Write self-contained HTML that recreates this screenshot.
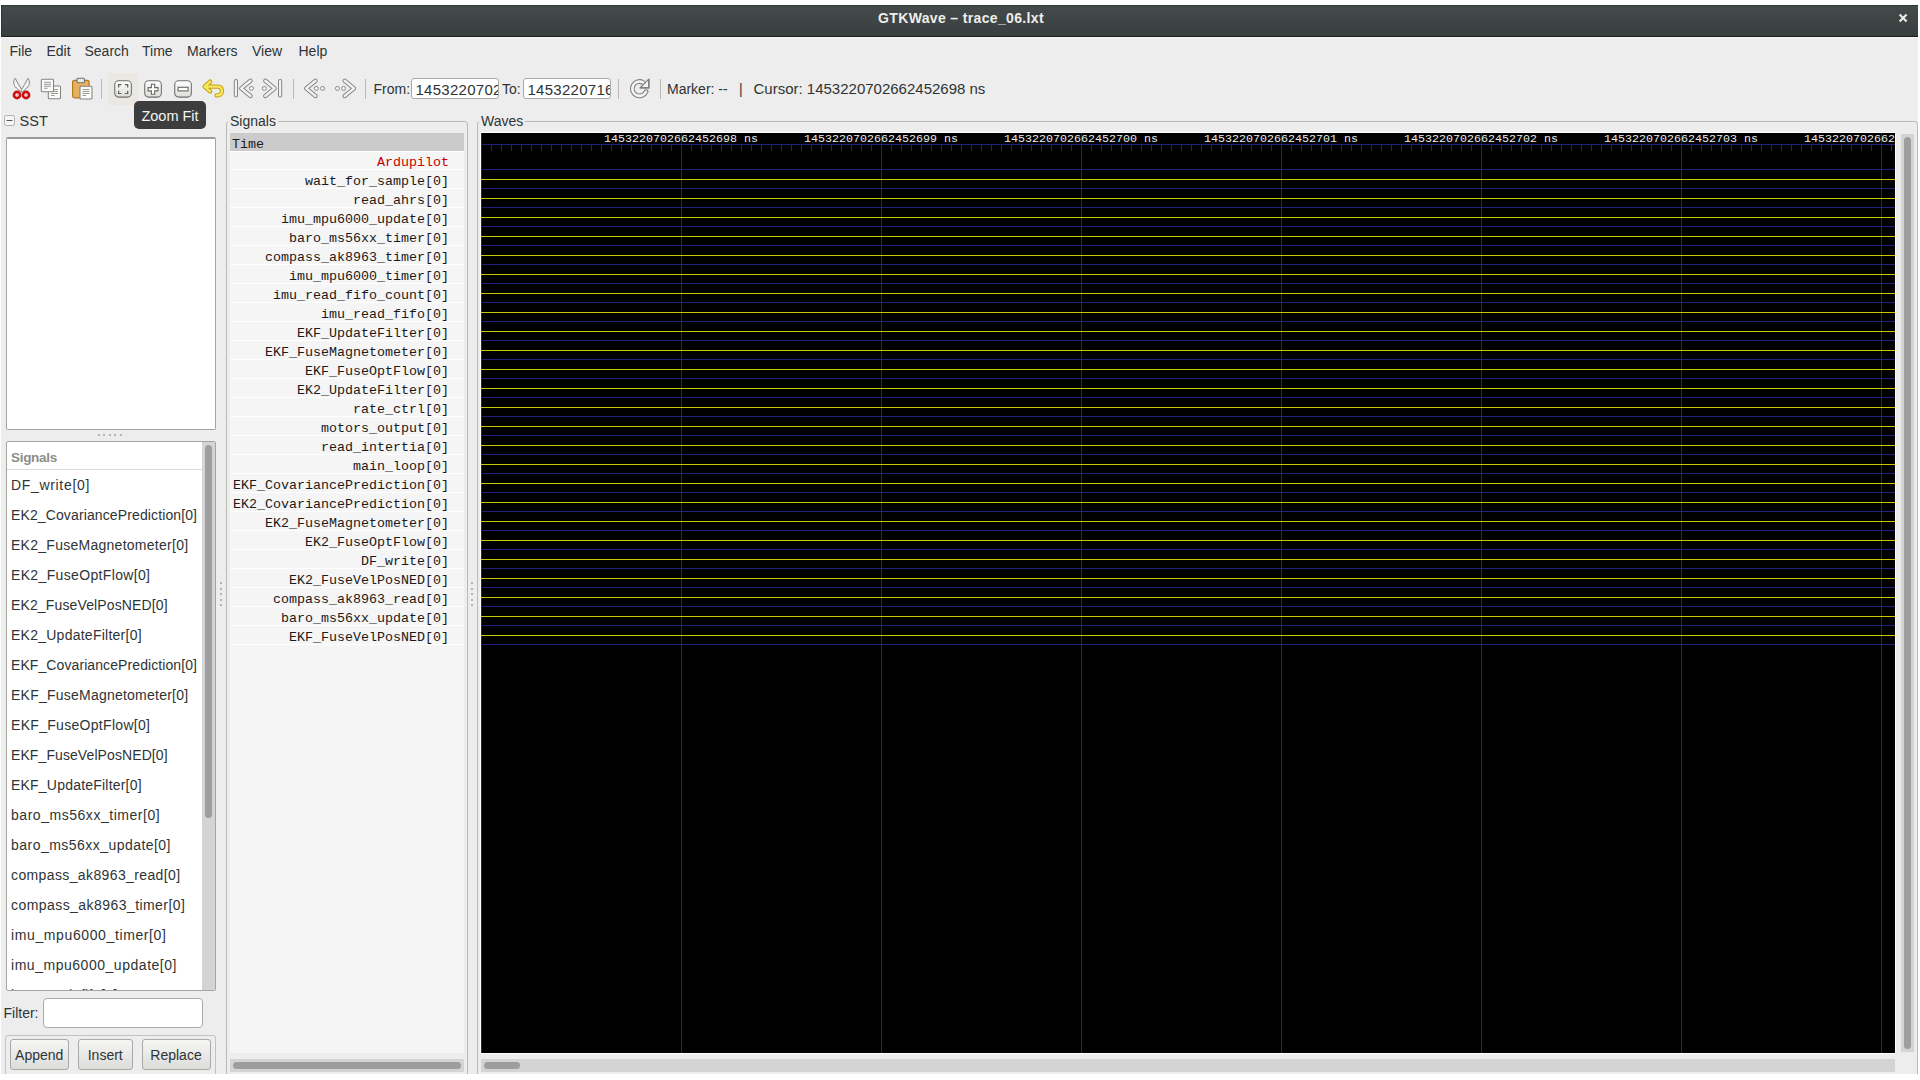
<!DOCTYPE html><html><head><meta charset="utf-8"><title>GTKWave</title><style>
*{box-sizing:border-box;margin:0;padding:0}
html,body{width:1920px;height:1080px;overflow:hidden;background:#fff}
body{position:relative;font-family:"Liberation Sans",sans-serif;font-size:14px;color:#2e3436}
.a{position:absolute}
.t{position:absolute;white-space:nowrap;line-height:14px;height:14px}
.m{font-family:"Liberation Mono",monospace;font-size:13.33px;line-height:14px;color:#1a1a1a}
.dot{position:absolute;width:2px;height:2px;background:#b4b6b0}
.sep{position:absolute;width:1px;background:#b9bab6}
.ent{position:absolute;background:#fff;border:1px solid #a9aba6;border-radius:3px;overflow:hidden}
.btn{position:absolute;border:1px solid #a8aaa5;border-radius:3px;background:linear-gradient(#f6f6f5,#dcdcda)}
.sbt{position:absolute;background:#d4d4d4}
.sth{position:absolute;background:#9c9e9f;border-radius:4px}
</style></head><body>
<div class="a" style="left:1px;top:5px;width:1917px;height:1069px;background:#ededed"></div>
<div class="a" style="left:1px;top:5px;width:1917px;height:31px;background:linear-gradient(#454b4b,#393e3e)"></div>
<div class="a" style="left:1px;top:5px;width:1917px;height:1px;background:#323838"></div>
<div class="a" style="left:1px;top:36px;width:1917px;height:1px;background:#1b1e1e"></div>
<div class="a" style="left:1px;top:37px;width:1917px;height:1px;background:#f6f6f6"></div>
<div class="a" style="left:1px;top:5px;width:1px;height:32px;background:#2e3333"></div>
<div class="t" style="left:800px;width:322px;text-align:center;top:11px;color:#eeeeec;font-weight:bold;font-size:14px;letter-spacing:0.35px">GTKWave – trace_06.lxt</div>
<svg class="a" style="left:1897px;top:12px" width="12" height="12" viewBox="0 0 12 12"><path d="M2.6 2.6L9.6 9.6M9.6 2.6L2.6 9.6" stroke="#eeeeec" stroke-width="2.1"/></svg>
<div class="t" style="left:9.5px;top:44px">File</div>
<div class="t" style="left:46.5px;top:44px">Edit</div>
<div class="t" style="left:84.5px;top:44px">Search</div>
<div class="t" style="left:142px;top:44px">Time</div>
<div class="t" style="left:187px;top:44px">Markers</div>
<div class="t" style="left:252px;top:44px">View</div>
<div class="t" style="left:298.5px;top:44px">Help</div>
<svg class="a" style="left:10px;top:76px" width="24" height="26" viewBox="0 0 24 26">
<path d="M5.2 2.2 C2.9 5.2 3.4 9.4 6.4 12 L11.3 16.4 L12.4 14.8 C9.6 10.5 7.4 6.3 5.2 2.2 Z" fill="#f3f3f1" stroke="#868684" stroke-width="1" stroke-linejoin="round"/>
<path d="M18 2.2 C20.3 5.2 19.8 9.4 16.8 12 L11.9 16.4 L10.8 14.8 C13.6 10.5 15.8 6.3 18 2.2 Z" fill="#f3f3f1" stroke="#868684" stroke-width="1" stroke-linejoin="round"/>
<circle cx="7" cy="19" r="3.1" fill="none" stroke="#cc1010" stroke-width="2.6"/>
<circle cx="16" cy="19" r="3.1" fill="none" stroke="#cc1010" stroke-width="2.6"/>
<circle cx="7" cy="19" r="1.1" fill="none" stroke="#f0a0a0" stroke-width="0.6"/>
<circle cx="16" cy="19" r="1.1" fill="none" stroke="#f0a0a0" stroke-width="0.6"/>
</svg>
<svg class="a" style="left:40px;top:78px" width="23" height="23" viewBox="0 0 23 23">
<rect x="8.3" y="8" width="12.2" height="12.8" rx="1" fill="#fbfbfa" stroke="#828380" stroke-width="1.05"/>
<path d="M11 11.5h7M11 13.5h7M11 15.5h7M11 17.5h3.5" stroke="#8d8e8b" stroke-width="0.9"/>
<rect x="1.3" y="1.3" width="12.2" height="12.4" rx="1" fill="#fbfbfa" stroke="#828380" stroke-width="1.05"/>
<path d="M4 4.3h7M4 6.3h7M4 8.3h7M4 10.3h3.5" stroke="#8d8e8b" stroke-width="0.9"/>
</svg>
<svg class="a" style="left:71px;top:76px" width="23" height="25" viewBox="0 0 23 25">
<rect x="1.6" y="4.3" width="16.5" height="17.5" rx="1.8" fill="#e5b060" stroke="#b5791e" stroke-width="1.2"/>
<rect x="6" y="2.2" width="7.5" height="4.5" rx="1.2" fill="#e8e8e6" stroke="#6f706d" stroke-width="1.1"/>
<rect x="9" y="10.3" width="12" height="12.6" rx="1" fill="#fbfbfa" stroke="#828380" stroke-width="1.05"/>
<path d="M11.5 13.5h7M11.5 15.5h7M11.5 17.5h7M11.5 19.5h3.5" stroke="#8d8e8b" stroke-width="0.9"/>
</svg>
<div class="sep" style="left:101px;top:79px;height:20px"></div>
<div class="a" style="left:108px;top:73px;width:30px;height:32px;background:#ebe8e3"></div>
<svg class="a" style="left:113px;top:79px" width="20" height="20" viewBox="0 0 20 20">
<defs><linearGradient id="g113" x1="0" y1="0" x2="0" y2="1"><stop offset="0" stop-color="#ffffff"/><stop offset="1" stop-color="#dcdcda"/></linearGradient></defs>
<rect x="1.75" y="1.8" width="16.6" height="16.3" rx="3.8" fill="url(#g113)" stroke="#6e6f6c" stroke-width="1.05"/><path d="M5.6 8.4V5.6h2.8M11.9 5.6h2.8v2.8M14.7 11.7v2.8h-2.8M8.4 14.5H5.6v-2.8" fill="none" stroke="#5f605d" stroke-width="1.2"/></svg>
<svg class="a" style="left:143px;top:79px" width="20" height="20" viewBox="0 0 20 20">
<defs><linearGradient id="g143" x1="0" y1="0" x2="0" y2="1"><stop offset="0" stop-color="#ffffff"/><stop offset="1" stop-color="#dcdcda"/></linearGradient></defs>
<rect x="1.75" y="1.8" width="16.6" height="16.3" rx="3.8" fill="url(#g143)" stroke="#6e6f6c" stroke-width="1.05"/><path d="M8.4 5.3h3.3v3.3h3.3v3.3h-3.3v3.3H8.4v-3.3H5.1V8.6h3.3z" fill="#fff" stroke="#666764" stroke-width="1.1"/></svg>
<svg class="a" style="left:173px;top:79px" width="20" height="20" viewBox="0 0 20 20">
<defs><linearGradient id="g173" x1="0" y1="0" x2="0" y2="1"><stop offset="0" stop-color="#ffffff"/><stop offset="1" stop-color="#dcdcda"/></linearGradient></defs>
<rect x="1.75" y="1.8" width="16.6" height="16.3" rx="3.8" fill="url(#g173)" stroke="#6e6f6c" stroke-width="1.05"/><rect x="5.1" y="8.3" width="10" height="3.6" fill="#fff" stroke="#666764" stroke-width="1.1"/></svg>
<svg class="a" style="left:201px;top:78px" width="25" height="21" viewBox="0 0 25 21">
<path d="M9.2 3.6 L3.6 8.6 L9.2 13.4 M4.6 8.6 H16.5 C19.8 8.6 21 10.8 21 13.2 C21 15.8 18.8 17.4 15.6 17.4" fill="none" stroke="#c8a20a" stroke-width="4.4" stroke-linecap="round" stroke-linejoin="round"/>
<path d="M9.2 3.6 L3.6 8.6 L9.2 13.4 M4.6 8.6 H16.5 C19.8 8.6 21 10.8 21 13.2 C21 15.8 18.8 17.4 15.6 17.4" fill="none" stroke="#f6e866" stroke-width="2.3" stroke-linecap="round" stroke-linejoin="round"/>
</svg>
<svg class="a" style="left:0;top:0" width="400" height="110" viewBox="0 0 400 110"><line x1="235.9" y1="81" x2="235.9" y2="95.5" stroke="#868784" stroke-width="4.2" stroke-linecap="round"/><line x1="235.9" y1="81" x2="235.9" y2="95.5" stroke="#f2f2f0" stroke-width="2.2" stroke-linecap="round"/><line x1="280.1" y1="81" x2="280.1" y2="95.5" stroke="#868784" stroke-width="4.2" stroke-linecap="round"/><line x1="280.1" y1="81" x2="280.1" y2="95.5" stroke="#f2f2f0" stroke-width="2.2" stroke-linecap="round"/><path d="M250.5 80.80000000000001 L241.2 88.4 L250.5 96.0" fill="none" stroke="#868784" stroke-width="4.4" stroke-linecap="round" stroke-linejoin="round"/><path d="M250.5 80.80000000000001 L241.2 88.4 L250.5 96.0" fill="none" stroke="#f2f2f0" stroke-width="2.4" stroke-linecap="round" stroke-linejoin="round"/><path d="M265.3 80.80000000000001 L274.6 88.4 L265.3 96.0" fill="none" stroke="#868784" stroke-width="4.4" stroke-linecap="round" stroke-linejoin="round"/><path d="M265.3 80.80000000000001 L274.6 88.4 L265.3 96.0" fill="none" stroke="#f2f2f0" stroke-width="2.4" stroke-linecap="round" stroke-linejoin="round"/><path d="M315.5 80.80000000000001 L306.2 88.4 L315.5 96.0" fill="none" stroke="#868784" stroke-width="4.4" stroke-linecap="round" stroke-linejoin="round"/><path d="M315.5 80.80000000000001 L306.2 88.4 L315.5 96.0" fill="none" stroke="#f2f2f0" stroke-width="2.4" stroke-linecap="round" stroke-linejoin="round"/><path d="M344.7 80.80000000000001 L354 88.4 L344.7 96.0" fill="none" stroke="#868784" stroke-width="4.4" stroke-linecap="round" stroke-linejoin="round"/><path d="M344.7 80.80000000000001 L354 88.4 L344.7 96.0" fill="none" stroke="#f2f2f0" stroke-width="2.4" stroke-linecap="round" stroke-linejoin="round"/><circle cx="251.4" cy="88.4" r="2" fill="#f5f5f3" stroke="#7e7f7c" stroke-width="0.9"/><circle cx="264.3" cy="88.4" r="2" fill="#f5f5f3" stroke="#7e7f7c" stroke-width="0.9"/><circle cx="316.3" cy="88.4" r="2" fill="#f5f5f3" stroke="#7e7f7c" stroke-width="0.9"/><circle cx="322.6" cy="88.4" r="2" fill="#f5f5f3" stroke="#7e7f7c" stroke-width="0.9"/><circle cx="337.4" cy="88.4" r="2" fill="#f5f5f3" stroke="#7e7f7c" stroke-width="0.9"/><circle cx="343.5" cy="88.4" r="2" fill="#f5f5f3" stroke="#7e7f7c" stroke-width="0.9"/></svg>
<div class="sep" style="left:293px;top:79px;height:20px"></div>
<div class="sep" style="left:365px;top:79px;height:20px"></div>
<div class="t" style="left:373.5px;top:82px">From:</div>
<div class="ent" style="left:411px;top:78px;width:88px;height:21px"><div class="t" style="left:3.5px;top:3px;font-size:15px;line-height:15px;height:15px;letter-spacing:0.27px">1453220702662452698</div></div>
<div class="t" style="left:502px;top:82px">To:</div>
<div class="ent" style="left:523px;top:78px;width:88px;height:21px"><div class="t" style="left:3.5px;top:3px;font-size:15px;line-height:15px;height:15px;letter-spacing:0.27px">1453220716620000000</div></div>
<div class="sep" style="left:618px;top:79px;height:20px"></div>
<svg class="a" style="left:628px;top:77px" width="24" height="24" viewBox="0 0 24 24">
<path d="M15.1 5.46 A7.2 7.2 0 1 0 18.03 14.74" fill="none" stroke="#80817e" stroke-width="4.8" stroke-linecap="round"/>
<path d="M12.3 10.9 L20.9 10.9 L20.9 2.3 Z" fill="#80817e" stroke="#80817e" stroke-width="1.6" stroke-linejoin="round"/>
<path d="M15.1 5.46 A7.2 7.2 0 1 0 18.03 14.74" fill="none" stroke="#f6f6f4" stroke-width="2.6" stroke-linecap="round"/>
<path d="M13.8 10.0 L20 10.0 L20 3.8 Z" fill="#f6f6f4"/>
</svg>
<div class="sep" style="left:660px;top:79px;height:20px"></div>
<div class="t" style="left:667px;top:82px">Marker: --</div>
<div class="t" style="left:739px;top:82px">|</div>
<div class="t" style="left:753.5px;top:81px;font-size:15px;line-height:15px;height:15px">Cursor: 1453220702662452698 ns</div>
<svg class="a" style="left:4px;top:115px" width="11" height="11" viewBox="0 0 11 11"><rect x="0.5" y="0.5" width="10" height="10" rx="2" fill="#f6f6f5" stroke="#b0b1ad"/><path d="M2.5 5.5h6" stroke="#555753" stroke-width="1"/></svg>
<div class="t" style="left:19.5px;top:114px;font-size:14.5px;letter-spacing:0.1px">SST</div>
<div class="a" style="left:6px;top:137px;width:210px;height:293px;background:#fff;border:1px solid #a4a5a1;border-top:2px solid #9b9c98;border-radius:2px"></div>
<div class="dot" style="left:98px;top:434px"></div>
<div class="dot" style="left:103px;top:434px"></div>
<div class="dot" style="left:109px;top:434px"></div>
<div class="dot" style="left:114px;top:434px"></div>
<div class="dot" style="left:120px;top:434px"></div>
<div class="a" style="left:6px;top:441px;width:210px;height:550px;background:#fff;border:1px solid #a4a5a1;border-radius:2px;overflow:hidden"><div class="a" style="left:0;top:27px;width:196px;height:1px;background:#d9d9d7"></div><div class="t" style="left:4px;top:8.5px;color:#8b8d89;font-weight:bold;font-size:13.5px;letter-spacing:-0.3px">Signals</div></div>
<div class="a" style="left:7px;top:470px;width:195px;height:520px;overflow:hidden">
<div class="t" style="left:4px;top:8px;letter-spacing:0.672px">DF_write[0]</div>
<div class="t" style="left:4px;top:38px;letter-spacing:0.12px">EK2_CovariancePrediction[0]</div>
<div class="t" style="left:4px;top:68px;letter-spacing:0.267px">EK2_FuseMagnetometer[0]</div>
<div class="t" style="left:4px;top:98px;letter-spacing:0.349px">EK2_FuseOptFlow[0]</div>
<div class="t" style="left:4px;top:128px;letter-spacing:0.132px">EK2_FuseVelPosNED[0]</div>
<div class="t" style="left:4px;top:158px;letter-spacing:0.251px">EK2_UpdateFilter[0]</div>
<div class="t" style="left:4px;top:188px;letter-spacing:0.09px">EKF_CovariancePrediction[0]</div>
<div class="t" style="left:4px;top:218px;letter-spacing:0.233px">EKF_FuseMagnetometer[0]</div>
<div class="t" style="left:4px;top:248px;letter-spacing:0.304px">EKF_FuseOptFlow[0]</div>
<div class="t" style="left:4px;top:278px;letter-spacing:0.092px">EKF_FuseVelPosNED[0]</div>
<div class="t" style="left:4px;top:308px;letter-spacing:0.209px">EKF_UpdateFilter[0]</div>
<div class="t" style="left:4px;top:338px;letter-spacing:0.536px">baro_ms56xx_timer[0]</div>
<div class="t" style="left:4px;top:368px;letter-spacing:0.464px">baro_ms56xx_update[0]</div>
<div class="t" style="left:4px;top:398px;letter-spacing:0.381px">compass_ak8963_read[0]</div>
<div class="t" style="left:4px;top:428px;letter-spacing:0.441px">compass_ak8963_timer[0]</div>
<div class="t" style="left:4px;top:458px;letter-spacing:0.616px">imu_mpu6000_timer[0]</div>
<div class="t" style="left:4px;top:488px;letter-spacing:0.53px">imu_mpu6000_update[0]</div>
<div class="t" style="left:4px;top:518px;letter-spacing:0.4px">imu_read_fifo[0]</div>
</div>
<div class="sbt" style="left:202px;top:442px;width:13px;height:548px"></div>
<div class="sth" style="left:205px;top:445px;width:7px;height:373px"></div>
<div class="t" style="left:3.5px;top:1006px">Filter:</div>
<div class="ent" style="left:43px;top:998px;width:160px;height:30px;border-radius:4px"></div>
<div class="a" style="left:5px;top:1035px;width:211px;height:50px;border:1px solid #c3c4c0;border-radius:3px"></div>
<div class="btn" style="left:10px;top:1039px;width:58.5px;height:31px"><div class="t" style="left:0;width:100%;text-align:center;top:8px">Append</div></div>
<div class="btn" style="left:78px;top:1039px;width:54.5px;height:31px"><div class="t" style="left:0;width:100%;text-align:center;top:8px">Insert</div></div>
<div class="btn" style="left:141.5px;top:1039px;width:69.0px;height:31px"><div class="t" style="left:0;width:100%;text-align:center;top:8px">Replace</div></div>
<div class="dot" style="left:220px;top:582px"></div>
<div class="dot" style="left:471px;top:582px"></div>
<div class="dot" style="left:220px;top:588px"></div>
<div class="dot" style="left:471px;top:588px"></div>
<div class="dot" style="left:220px;top:593px"></div>
<div class="dot" style="left:471px;top:593px"></div>
<div class="dot" style="left:220px;top:599px"></div>
<div class="dot" style="left:471px;top:599px"></div>
<div class="dot" style="left:220px;top:604px"></div>
<div class="dot" style="left:471px;top:604px"></div>
<div class="a" style="left:226px;top:121px;width:242px;height:1000px;border:1px solid #b9bcb5;border-radius:3px"></div>
<div class="t" style="left:228px;top:114px;padding:0 2px;background:#ededed">Signals</div>
<div class="a" style="left:230px;top:133px;width:234px;height:920px;background:#f5f5f5"></div>
<div class="a" style="left:230px;top:133px;width:234px;height:18px;background:#cbcbcb"></div>
<div class="a" style="left:230px;top:151px;width:234px;height:1px;background:#fff"></div>
<div class="a" style="left:230px;top:169px;width:234px;height:1px;background:#fff"></div>
<div class="a" style="left:230px;top:188px;width:234px;height:1px;background:#fff"></div>
<div class="a" style="left:230px;top:207px;width:234px;height:1px;background:#fff"></div>
<div class="a" style="left:230px;top:226px;width:234px;height:1px;background:#fff"></div>
<div class="a" style="left:230px;top:245px;width:234px;height:1px;background:#fff"></div>
<div class="a" style="left:230px;top:264px;width:234px;height:1px;background:#fff"></div>
<div class="a" style="left:230px;top:283px;width:234px;height:1px;background:#fff"></div>
<div class="a" style="left:230px;top:302px;width:234px;height:1px;background:#fff"></div>
<div class="a" style="left:230px;top:321px;width:234px;height:1px;background:#fff"></div>
<div class="a" style="left:230px;top:340px;width:234px;height:1px;background:#fff"></div>
<div class="a" style="left:230px;top:359px;width:234px;height:1px;background:#fff"></div>
<div class="a" style="left:230px;top:378px;width:234px;height:1px;background:#fff"></div>
<div class="a" style="left:230px;top:397px;width:234px;height:1px;background:#fff"></div>
<div class="a" style="left:230px;top:416px;width:234px;height:1px;background:#fff"></div>
<div class="a" style="left:230px;top:435px;width:234px;height:1px;background:#fff"></div>
<div class="a" style="left:230px;top:454px;width:234px;height:1px;background:#fff"></div>
<div class="a" style="left:230px;top:473px;width:234px;height:1px;background:#fff"></div>
<div class="a" style="left:230px;top:492px;width:234px;height:1px;background:#fff"></div>
<div class="a" style="left:230px;top:511px;width:234px;height:1px;background:#fff"></div>
<div class="a" style="left:230px;top:530px;width:234px;height:1px;background:#fff"></div>
<div class="a" style="left:230px;top:549px;width:234px;height:1px;background:#fff"></div>
<div class="a" style="left:230px;top:568px;width:234px;height:1px;background:#fff"></div>
<div class="a" style="left:230px;top:587px;width:234px;height:1px;background:#fff"></div>
<div class="a" style="left:230px;top:606px;width:234px;height:1px;background:#fff"></div>
<div class="a" style="left:230px;top:625px;width:234px;height:1px;background:#fff"></div>
<div class="a" style="left:230px;top:644px;width:234px;height:1px;background:#fff"></div>
<div class="t m" style="left:232px;top:137.5px">Time</div>
<div class="t m" style="left:200px;width:249px;text-align:right;top:155.5px;color:#c80000">Ardupilot</div>
<div class="t m" style="left:200px;width:249px;text-align:right;top:174.6px">wait_for_sample[0]</div>
<div class="t m" style="left:200px;width:249px;text-align:right;top:193.6px">read_ahrs[0]</div>
<div class="t m" style="left:200px;width:249px;text-align:right;top:212.6px">imu_mpu6000_update[0]</div>
<div class="t m" style="left:200px;width:249px;text-align:right;top:231.6px">baro_ms56xx_timer[0]</div>
<div class="t m" style="left:200px;width:249px;text-align:right;top:250.6px">compass_ak8963_timer[0]</div>
<div class="t m" style="left:200px;width:249px;text-align:right;top:269.6px">imu_mpu6000_timer[0]</div>
<div class="t m" style="left:200px;width:249px;text-align:right;top:288.6px">imu_read_fifo_count[0]</div>
<div class="t m" style="left:200px;width:249px;text-align:right;top:307.6px">imu_read_fifo[0]</div>
<div class="t m" style="left:200px;width:249px;text-align:right;top:326.6px">EKF_UpdateFilter[0]</div>
<div class="t m" style="left:200px;width:249px;text-align:right;top:345.6px">EKF_FuseMagnetometer[0]</div>
<div class="t m" style="left:200px;width:249px;text-align:right;top:364.6px">EKF_FuseOptFlow[0]</div>
<div class="t m" style="left:200px;width:249px;text-align:right;top:383.6px">EK2_UpdateFilter[0]</div>
<div class="t m" style="left:200px;width:249px;text-align:right;top:402.6px">rate_ctrl[0]</div>
<div class="t m" style="left:200px;width:249px;text-align:right;top:421.6px">motors_output[0]</div>
<div class="t m" style="left:200px;width:249px;text-align:right;top:440.6px">read_intertia[0]</div>
<div class="t m" style="left:200px;width:249px;text-align:right;top:459.6px">main_loop[0]</div>
<div class="t m" style="left:200px;width:249px;text-align:right;top:478.6px">EKF_CovariancePrediction[0]</div>
<div class="t m" style="left:200px;width:249px;text-align:right;top:497.6px">EK2_CovariancePrediction[0]</div>
<div class="t m" style="left:200px;width:249px;text-align:right;top:516.6px">EK2_FuseMagnetometer[0]</div>
<div class="t m" style="left:200px;width:249px;text-align:right;top:535.6px">EK2_FuseOptFlow[0]</div>
<div class="t m" style="left:200px;width:249px;text-align:right;top:554.6px">DF_write[0]</div>
<div class="t m" style="left:200px;width:249px;text-align:right;top:573.6px">EK2_FuseVelPosNED[0]</div>
<div class="t m" style="left:200px;width:249px;text-align:right;top:592.6px">compass_ak8963_read[0]</div>
<div class="t m" style="left:200px;width:249px;text-align:right;top:611.6px">baro_ms56xx_update[0]</div>
<div class="t m" style="left:200px;width:249px;text-align:right;top:630.6px">EKF_FuseVelPosNED[0]</div>
<div class="sbt" style="left:230px;top:1059px;width:234px;height:13px"></div>
<div class="sth" style="left:233px;top:1062px;width:228px;height:7px"></div>
<div class="a" style="left:477px;top:121px;width:441px;height:1000px;border:1px solid #b9bcb5;border-radius:3px;width:1441px"></div>
<div class="t" style="left:479px;top:114px;padding:0 2px;background:#ededed">Waves</div>
<div class="a" style="left:480px;top:132px;width:1416px;height:922px;background:#fff"></div>
<svg class="a" style="left:481px;top:133px" width="1414" height="920" viewBox="0 0 1414 920" shape-rendering="crispEdges">
<rect width="1414" height="920" fill="#000"/>
<path d="M0.5 0V920 M0 11.5H1414 M10.5 12V18 M20.5 12V18 M30.5 12V18 M40.5 12V18 M50.5 12V18 M60.5 12V18 M70.5 12V18 M80.5 12V18 M90.5 12V18 M100.5 12V18 M110.5 12V18 M120.5 12V18 M130.5 12V18 M140.5 12V18 M150.5 12V18 M160.5 12V18 M170.5 12V18 M180.5 12V18 M190.5 12V18 M200.5 12V18 M210.5 12V18 M220.5 12V18 M230.5 12V18 M240.5 12V18 M250.5 12V18 M260.5 12V18 M270.5 12V18 M280.5 12V18 M290.5 12V18 M300.5 12V18 M310.5 12V18 M320.5 12V18 M330.5 12V18 M340.5 12V18 M350.5 12V18 M360.5 12V18 M370.5 12V18 M380.5 12V18 M390.5 12V18 M400.5 12V18 M410.5 12V18 M420.5 12V18 M430.5 12V18 M440.5 12V18 M450.5 12V18 M460.5 12V18 M470.5 12V18 M480.5 12V18 M490.5 12V18 M500.5 12V18 M510.5 12V18 M520.5 12V18 M530.5 12V18 M540.5 12V18 M550.5 12V18 M560.5 12V18 M570.5 12V18 M580.5 12V18 M590.5 12V18 M600.5 12V18 M610.5 12V18 M620.5 12V18 M630.5 12V18 M640.5 12V18 M650.5 12V18 M660.5 12V18 M670.5 12V18 M680.5 12V18 M690.5 12V18 M700.5 12V18 M710.5 12V18 M720.5 12V18 M730.5 12V18 M740.5 12V18 M750.5 12V18 M760.5 12V18 M770.5 12V18 M780.5 12V18 M790.5 12V18 M800.5 12V18 M810.5 12V18 M820.5 12V18 M830.5 12V18 M840.5 12V18 M850.5 12V18 M860.5 12V18 M870.5 12V18 M880.5 12V18 M890.5 12V18 M900.5 12V18 M910.5 12V18 M920.5 12V18 M930.5 12V18 M940.5 12V18 M950.5 12V18 M960.5 12V18 M970.5 12V18 M980.5 12V18 M990.5 12V18 M1000.5 12V18 M1010.5 12V18 M1020.5 12V18 M1030.5 12V18 M1040.5 12V18 M1050.5 12V18 M1060.5 12V18 M1070.5 12V18 M1080.5 12V18 M1090.5 12V18 M1100.5 12V18 M1110.5 12V18 M1120.5 12V18 M1130.5 12V18 M1140.5 12V18 M1150.5 12V18 M1160.5 12V18 M1170.5 12V18 M1180.5 12V18 M1190.5 12V18 M1200.5 12V18 M1210.5 12V18 M1220.5 12V18 M1230.5 12V18 M1240.5 12V18 M1250.5 12V18 M1260.5 12V18 M1270.5 12V18 M1280.5 12V18 M1290.5 12V18 M1300.5 12V18 M1310.5 12V18 M1320.5 12V18 M1330.5 12V18 M1340.5 12V18 M1350.5 12V18 M1360.5 12V18 M1370.5 12V18 M1380.5 12V18 M1390.5 12V18 M1400.5 12V18 M1410.5 12V18 M200.5 0V920 M400.5 0V920 M600.5 0V920 M800.5 0V920 M1000.5 0V920 M1200.5 0V920 M1400.5 0V920 M1 36.5H1414 M1 55.5H1414 M1 74.5H1414 M1 93.5H1414 M1 112.5H1414 M1 131.5H1414 M1 150.5H1414 M1 169.5H1414 M1 188.5H1414 M1 207.5H1414 M1 226.5H1414 M1 245.5H1414 M1 264.5H1414 M1 283.5H1414 M1 302.5H1414 M1 321.5H1414 M1 340.5H1414 M1 359.5H1414 M1 378.5H1414 M1 397.5H1414 M1 416.5H1414 M1 435.5H1414 M1 454.5H1414 M1 473.5H1414 M1 492.5H1414 M1 511.5H1414" stroke="#22227c" stroke-width="1" fill="none"/>
<path d="M0 46.5H1414 M0 65.5H1414 M0 84.5H1414 M0 103.5H1414 M0 122.5H1414 M0 141.5H1414 M0 160.5H1414 M0 179.5H1414 M0 198.5H1414 M0 217.5H1414 M0 236.5H1414 M0 255.5H1414 M0 274.5H1414 M0 293.5H1414 M0 312.5H1414 M0 331.5H1414 M0 350.5H1414 M0 369.5H1414 M0 388.5H1414 M0 407.5H1414 M0 426.5H1414 M0 445.5H1414 M0 464.5H1414 M0 483.5H1414 M0 502.5H1414" stroke="#c8c800" stroke-width="1" fill="none"/>
</svg>
<div class="a" style="left:481px;top:133px;width:1414px;height:12px;overflow:hidden">
<div class="t m" style="left:123px;top:0.6px;font-size:11.67px;line-height:11px;height:11px;color:#ececec">1453220702662452698 ns</div>
<div class="t m" style="left:323px;top:0.6px;font-size:11.67px;line-height:11px;height:11px;color:#ececec">1453220702662452699 ns</div>
<div class="t m" style="left:523px;top:0.6px;font-size:11.67px;line-height:11px;height:11px;color:#ececec">1453220702662452700 ns</div>
<div class="t m" style="left:723px;top:0.6px;font-size:11.67px;line-height:11px;height:11px;color:#ececec">1453220702662452701 ns</div>
<div class="t m" style="left:923px;top:0.6px;font-size:11.67px;line-height:11px;height:11px;color:#ececec">1453220702662452702 ns</div>
<div class="t m" style="left:1123px;top:0.6px;font-size:11.67px;line-height:11px;height:11px;color:#ececec">1453220702662452703 ns</div>
<div class="t m" style="left:1323px;top:0.6px;font-size:11.67px;line-height:11px;height:11px;color:#ececec">1453220702662452704 ns</div>
</div>
<div class="sbt" style="left:1901px;top:134px;width:13px;height:918px"></div>
<div class="sth" style="left:1904px;top:137px;width:7px;height:912px"></div>
<div class="sbt" style="left:481px;top:1059px;width:1414px;height:13px"></div>
<div class="sth" style="left:484px;top:1062px;width:36px;height:7px"></div>
<div class="a" style="left:134px;top:101px;width:72px;height:28px;background:#3d3d3d;border-radius:5px"><div class="t" style="left:0;width:100%;text-align:center;top:8px;color:#f4f4f4;font-size:14.5px">Zoom Fit</div></div>
<div class="a" style="left:0;top:1074px;width:1920px;height:6px;background:#fff"></div>
</body></html>
